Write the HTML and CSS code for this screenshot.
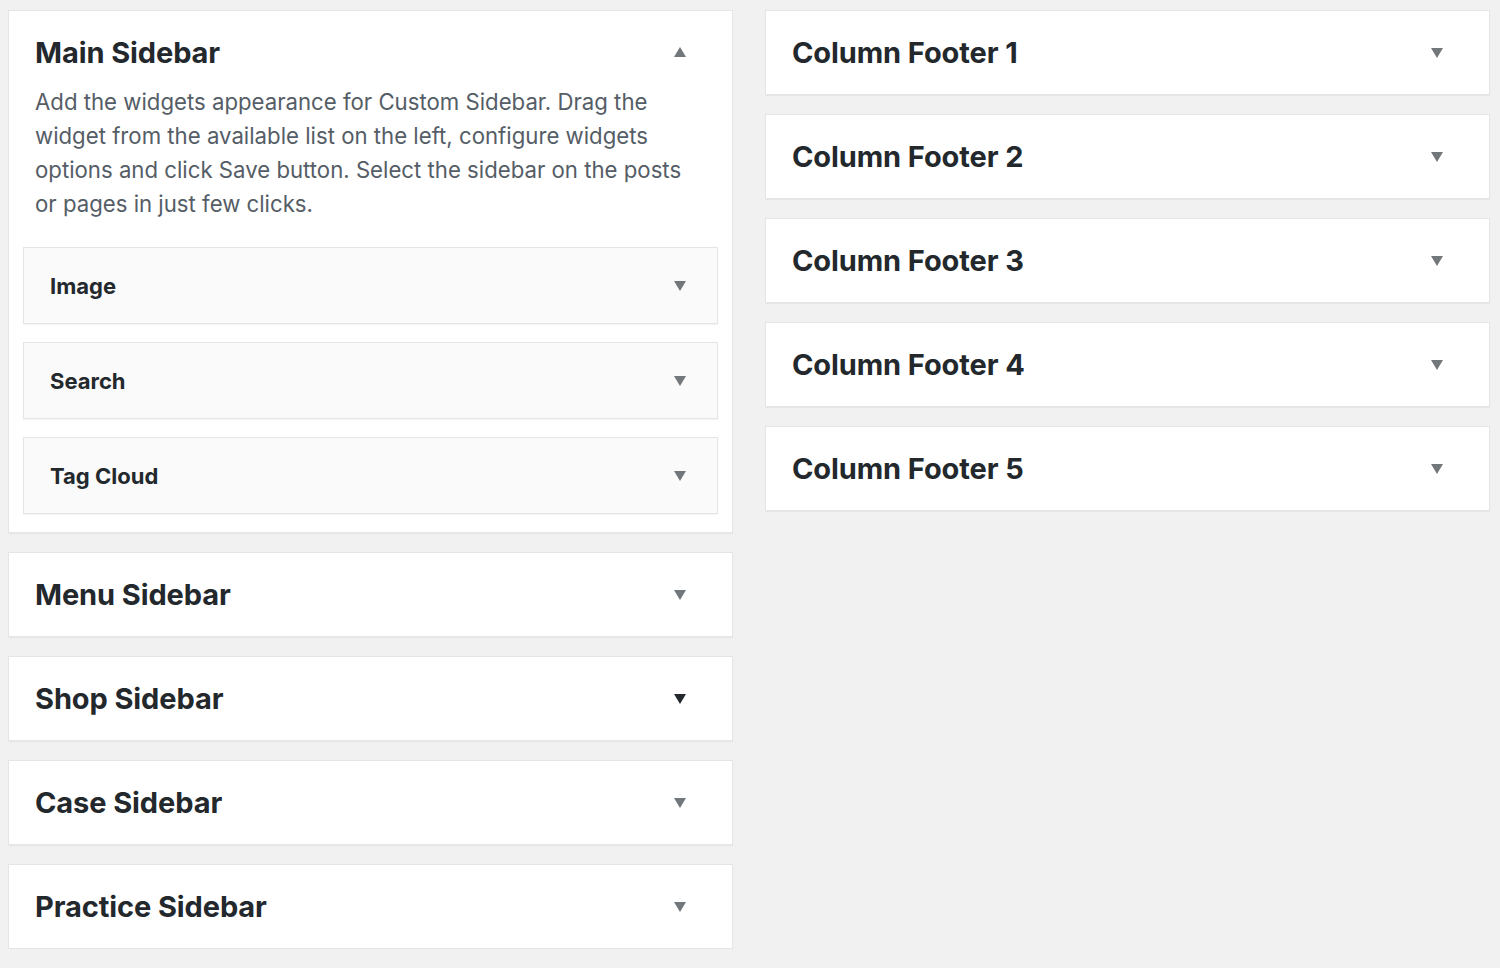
FILE: index.html
```html
<!DOCTYPE html>
<html>
<head>
<meta charset="utf-8">
<link rel="stylesheet" href="styles.css">
</head>
<body>
<div class="page">
  <div class="col">
    <div class="box open">
      <div class="head">
        <h2>Main Sidebar</h2>
        <span class="arrow up"></span>
      </div>
      <p class="desc">Add the widgets appearance for Custom Sidebar. Drag the widget from the available list on the left, configure widgets options and click Save button. Select the sidebar on the posts or pages in just few clicks.</p>
      <div class="widgets">
        <div class="widget"><h3>Image</h3><span class="arrow"></span></div>
        <div class="widget"><h3>Search</h3><span class="arrow"></span></div>
        <div class="widget"><h3>Tag Cloud</h3><span class="arrow"></span></div>
      </div>
    </div>
    <div class="box"><div class="head"><h2>Menu Sidebar</h2><span class="arrow"></span></div></div>
    <div class="box"><div class="head"><h2>Shop Sidebar</h2><span class="arrow dark"></span></div></div>
    <div class="box"><div class="head"><h2>Case Sidebar</h2><span class="arrow"></span></div></div>
    <div class="box"><div class="head"><h2>Practice Sidebar</h2><span class="arrow"></span></div></div>
  </div>
  <div class="col">
    <div class="box"><div class="head"><h2>Column Footer 1</h2><span class="arrow"></span></div></div>
    <div class="box"><div class="head"><h2>Column Footer 2</h2><span class="arrow"></span></div></div>
    <div class="box"><div class="head"><h2>Column Footer 3</h2><span class="arrow"></span></div></div>
    <div class="box"><div class="head"><h2>Column Footer 4</h2><span class="arrow"></span></div></div>
    <div class="box"><div class="head"><h2>Column Footer 5</h2><span class="arrow"></span></div></div>
  </div>
</div>
</body>
</html>
```

FILE: styles.css
```css
html, body {
  margin: 0;
  padding: 0;
  background: #f1f1f1;
}
body {
  font-family: Inter, "Noto Sans", "Liberation Sans", sans-serif;
  color: #23282d;
}
.page {
  display: grid;
  grid-template-columns: 725px 725px;
  column-gap: 32px;
  padding: 10px 10px 0 8px;
  align-items: start;
}
.col {
  display: flex;
  flex-direction: column;
  gap: 19px;
}
.box {
  background: #fff;
  border: 1px solid #e5e5e5;
  box-shadow: 0 1px 1px rgba(0,0,0,0.04);
}
.head {
  display: flex;
  align-items: center;
  justify-content: space-between;
  height: 83px;
  padding: 0 46px 0 26px;
}
.head h2 {
  margin: 0;
  font-size: 29px;
  font-weight: 700;
  line-height: 32px;
  letter-spacing: -0.1px;
  color: #23282d;
}
.arrow {
  width: 0;
  height: 0;
  border-left: 6.5px solid transparent;
  border-right: 6.5px solid transparent;
  border-top: 10px solid #72777c;
}
.arrow.dark {
  border-top-color: #23282d;
}
.arrow.up {
  border-top: 0;
  border-bottom: 10px solid #72777c;
  margin-top: -1px;
}
.desc {
  margin: -9px 0 0 0;
  padding: 0 30px 0 26px;
  font-size: 22.2px;
  line-height: 34px;
  color: #555d66;
}
.widgets {
  display: flex;
  flex-direction: column;
  gap: 18px;
  padding: 26px 14px 18px 14px;
}
.widget {
  display: flex;
  align-items: center;
  justify-content: space-between;
  height: 75px;
  background: #fafafa;
  border: 1px solid #e5e5e5;
  box-shadow: 0 1px 1px rgba(0,0,0,0.04);
  padding: 0 31px 0 26px;
}
.widget h3 {
  margin: 0;
  font-size: 22px;
  font-weight: 700;
  line-height: 28px;
  color: #23282d;
}
```
